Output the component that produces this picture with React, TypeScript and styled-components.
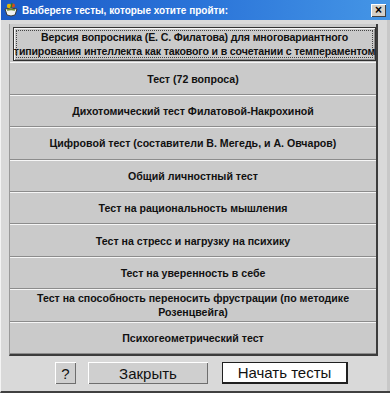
import styled, { createGlobalStyle, css } from "styled-components";

const GlobalStyle = createGlobalStyle`
  html, body {
    margin: 0;
    padding: 0;
    background: #d6d6d6;
  }
  * {
    box-sizing: border-box;
  }
`;

const Window = styled.div`
  width: 390px;
  height: 393px;
  display: flex;
  flex-direction: column;
  background: #d9d9d9;
  border-left: 1px solid #f4f4f4;
  border-bottom: 2px solid #404040;
  font-family: "Liberation Sans", Arial, sans-serif;
  overflow: hidden;
`;

const TitleBar = styled.div`
  height: 20px;
  flex: none;
  display: flex;
  align-items: center;
  gap: 3px;
  padding: 0 4px 0 2px;
  background: linear-gradient(90deg, #1b5ac6 0%, #2a73d8 50%, #4596e6 100%);
  color: #fff;
`;

const TitleText = styled.div`
  flex: 1;
  font-size: 10px;
  font-weight: 700;
`;

const CloseButton = styled.div`
  width: 15px;
  height: 13px;
  display: grid;
  place-items: center;
  background: #d4d0c8;
  box-shadow: inset 1px 1px #ffffff, inset -1px -1px #404040;
  color: #000;
  font-size: 12px;
  font-weight: 700;
  line-height: 1;
`;

const Body = styled.div`
  flex: 1;
  display: flex;
  flex-direction: column;
  padding: 4px 9px 0 8px;
  border-right: 3px solid #c8c8c8;
`;

const List = styled.div`
  height: 332px;
  flex: none;
  display: flex;
  flex-direction: column;
  border-right: 2px solid #3c3c3c;
  border-bottom: 2px solid #3c3c3c;
  border-left: 1px solid #9a9a9a;
  background: #c9c9c9;
`;

const TestButton = styled.div<{ $focused?: boolean }>`
  flex: 1 1 0;
  min-height: 0;
  display: flex;
  align-items: center;
  justify-content: center;
  text-align: center;
  white-space: pre;
  background: #cacaca;
  box-shadow: inset 0 1px #f6f6f6, inset 0 -1px #8c8c8c;
  color: #111;
  font-size: 10.6px;
  font-weight: 700;
  line-height: 14px;
  ${(p) =>
    p.$focused &&
    css`
      margin: 3px 0 1px 3px;
      border: 1px solid #303030;
      box-shadow: inset 1px 1px #f6f6f6, inset -1px -1px #8c8c8c;
      outline: 1px dotted #444;
      outline-offset: -4px;
      letter-spacing: -0.15px;
    `}
`;

const Footer = styled.div`
  flex: 1;
  display: flex;
  align-items: center;
  padding: 0 0 1px 46px;
  gap: 12px;
`;

const FooterButton = styled.div<{ $width: number; $primary?: boolean }>`
  width: ${(p) => p.$width}px;
  height: 22px;
  display: grid;
  place-items: center;
  font-size: 15px;
  color: #111;
  background: ${(p) => (p.$primary ? "#ffffff" : "#cfcfcf")};
  box-shadow: inset 1px 1px #ffffff, inset -1px -1px #6e6e6e;
  ${(p) =>
    p.$primary &&
    css`
      margin-left: 2px;
      border: 2px solid #202020;
      border-top-width: 1px;
      border-left-width: 1px;
      box-shadow: none;
    `}
`;

const tests = [
  "Версия вопросника (Е. С. Филатова) для многовариантного\nтипирования интеллекта как такового и в сочетании с темпераментом",
  "Тест (72 вопроса)",
  "Дихотомический тест Филатовой-Накрохиной",
  "Цифровой тест (составители В. Мегедь, и А. Овчаров)",
  "Общий личностный тест",
  "Тест на рациональность мышления",
  "Тест на стресс и нагрузку на психику",
  "Тест на уверенность в себе",
  "Тест на способность переносить фрустрации (по методике\nРозенцвейга)",
  "Психогеометрический тест",
];

function AppIcon() {
  return (
    <svg width="16" height="16" viewBox="0 0 16 16">
      <path d="M2 7 Q8 5 14 7 L12 13 Q8 15 4 13 Z" fill="#f2f2f2" stroke="#3a3a3a" strokeWidth="1" />
      <path d="M4 8 Q8 7 12 8" fill="none" stroke="#6a8a2a" strokeWidth="1.5" />
      <circle cx="6" cy="4" r="2.2" fill="#e6b800" />
      <circle cx="10" cy="3.5" r="2" fill="#d84a1c" />
      <path d="M8 6 L9 1" stroke="#2a7a2a" strokeWidth="1.3" />
    </svg>
  );
}

export default function App() {
  return (
    <>
      <GlobalStyle />
      <Window>
        <TitleBar>
          <AppIcon />
          <TitleText>Выберете тесты, которые хотите пройти:</TitleText>
          <CloseButton>×</CloseButton>
        </TitleBar>
        <Body>
          <List>
            {tests.map((t, i) => (
              <TestButton key={t} $focused={i === 0}>
                {t}
              </TestButton>
            ))}
          </List>
          <Footer>
            <FooterButton $width={21}>?</FooterButton>
            <FooterButton $width={120}>Закрыть</FooterButton>
            <FooterButton $width={126} $primary>
              Начать тесты
            </FooterButton>
          </Footer>
        </Body>
      </Window>
    </>
  );
}
